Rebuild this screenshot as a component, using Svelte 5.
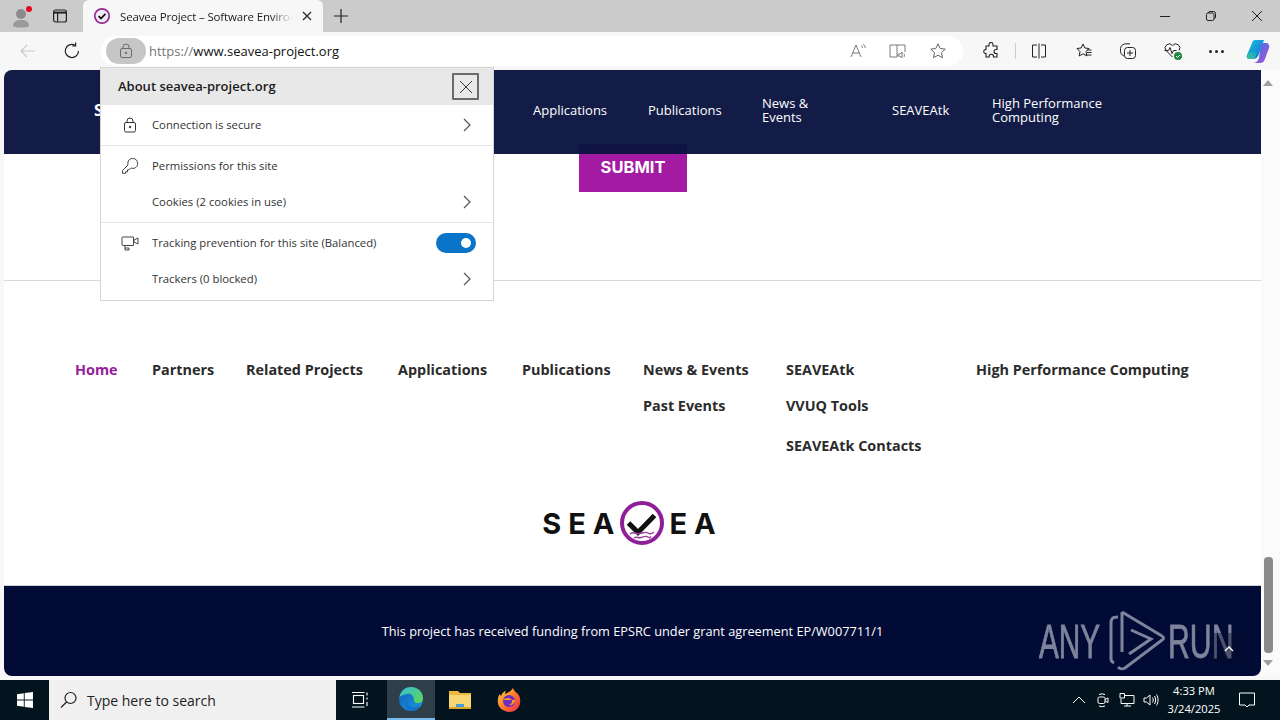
<script lang="ts">
	const headerNav = [
		{ label: 'Applications', w: 115 },
		{ label: 'Publications', w: 114 },
		{ label: 'News & Events', w: 130, wrap: 70 },
		{ label: 'SEAVEAtk', w: 100 },
		{ label: 'High Performance Computing', w: 140, wrap: 125 }
	];
	const footerNav = [
		{ items: ['Home'], active: true },
		{ items: ['Partners'] },
		{ items: ['Related Projects'] },
		{ items: ['Applications'] },
		{ items: ['Publications'] },
		{ items: ['News & Events', 'Past Events'] },
		{ items: ['SEAVEAtk', 'VVUQ Tools', 'SEAVEAtk Contacts'] },
		{ items: ['High Performance Computing'] }
	];
</script>

<div class="browser">
	<div class="tabstrip">
		<div class="profile">
			<svg width="24" height="24" viewBox="0 0 24 24">
				<circle cx="11" cy="10" r="5" fill="#8b8b8b" />
				<path d="M3 22c0-5 4-6 8-6s8 1 8 6c-2 2-14 2-16 0z" fill="#9a9a9a" />
				<circle cx="19" cy="5" r="3" fill="#e00b1c" />
			</svg>
		</div>
		<div class="tabs-btn">
			<svg width="16" height="16" viewBox="0 0 16 16" fill="none" stroke="#222" stroke-width="1.2">
				<rect x="1.6" y="2" width="12.8" height="12" rx="2" />
				<path d="M1.6 4.6h12.8" stroke-width="2" />
				<path d="M5.6 4.6V14" />
			</svg>
		</div>
		<div class="tab">
			<svg class="fav" width="18" height="18" viewBox="0 0 18 18" fill="none">
				<circle cx="9" cy="9" r="7.2" stroke="#8f2b96" stroke-width="1.7" fill="#f3e9f4" />
				<path d="M5.6 9.200l2.400 2.300 4.400-4.600" stroke="#111" stroke-width="1.8" />
			</svg>
			<span class="tab-title">Seavea Project – Software Environment</span>
			<svg width="12" height="12" viewBox="0 0 12 12" stroke="#222" stroke-width="1.2"><path d="M2 2l8 8M10 2l-8 8" /></svg>
		</div>
		<div class="new-tab">
			<svg width="16" height="16" viewBox="0 0 16 16" stroke="#222" stroke-width="1.2"><path d="M8 1v14M1 8h14" /></svg>
		</div>
		<div class="window-btns">
			<svg width="12" height="12" viewBox="0 0 12 12" stroke="#222"><path d="M1 6.5h10" /></svg>
			<svg width="12" height="12" viewBox="0 0 12 12" fill="none" stroke="#222"><rect x="1.5" y="3" width="7.5" height="7.5" rx="1.5" /><path d="M3.5 3V2.8a1.5 1.5 0 0 1 1.5-1.3h3.5a2 2 0 0 1 2 2V7a1.5 1.5 0 0 1-1.5 1.5" /></svg>
			<svg width="12" height="12" viewBox="0 0 12 12" stroke="#222"><path d="M1 1l10 10M11 1L1 11" /></svg>
		</div>
	</div>

	<div class="toolbar">
		<svg class="back" width="18" height="18" viewBox="0 0 18 18" fill="none" stroke="#c9c9c9" stroke-width="1.2"><path d="M16 9H2M8 3L2 9l6 6" /></svg>
		<svg class="reload" width="18" height="18" viewBox="0 0 18 18" fill="none" stroke="#222" stroke-width="1.2"><path d="M15.5 9A6.6 6.6 0 1 1 11.8 3" /><path d="M12.6 .6v3.2H9.4" /></svg>
		<div class="omnibox">
			<div class="lock-pill">
				<svg width="14" height="16" viewBox="0 0 14 16" fill="none" stroke="#6d6d6d"><rect x="1.5" y="5.5" width="11" height="9" rx="1.5" /><path d="M4 5.5V4a3 3 0 0 1 6 0v1.500" /><circle cx="7" cy="10" r=".8" fill="#6d6d6d" /></svg>
			</div>
			<span class="url"><span class="scheme">https://</span>www.seavea-project.org</span>
			<div class="omni-icons">
				<svg width="18" height="18" viewBox="0 0 18 18" fill="none" stroke="#7a7a7a"><path d="M2 15L7 3l5 12M3.800 11h6.500" /><path d="M12 3.500c1 .5 1.500 1.500 1.500 2.500M14 2c1.500 1 2.200 2.200 2.200 4" /></svg>
				<svg width="20" height="18" viewBox="0 0 20 18" fill="none" stroke="#7a7a7a"><path d="M9 3H2v12h7V3zM9 3h8v7" /><path d="M10 12h2l2-2v6l-2-2h-2zM16 11.500c.6 1 .6 2.500 0 3.500" /></svg>
				<svg width="18" height="18" viewBox="0 0 18 18" fill="none" stroke="#666"><path d="M9 1.800l2.200 4.700 5 .6-3.700 3.500 1 5.100L9 13.200l-4.500 2.500 1-5.100-3.700-3.500 5-.6z" /></svg>
			</div>
		</div>
		<div class="tool-icons">
			<svg class="ext" width="18" height="18" viewBox="0 0 18 18" fill="none" stroke="#222" stroke-width="1.1"><path d="M7 2.500a2 2 0 0 1 4 0V4h4v3.500h-1a2 2 0 0 0 0 4h1V15h-3.500v-.5a2.200 2.200 0 0 0-4.400 0v.5H4v-3.500a2 2 0 0 1-.5-4H4V4h3z" /></svg>
			<span class="divider"></span>
			<svg class="split" width="18" height="18" viewBox="0 0 18 18" fill="none" stroke="#222"><path d="M7 3H2.500v12H7M11 3h4.500v12H11M9 1.500v15" /></svg>
			<svg class="favs" width="18" height="18" viewBox="0 0 18 18" fill="none" stroke="#222"><path d="M8 2l1.800 4 4.200.5-3 3 .8 4.500L8 11.800 4.200 14 5 9.500 2 6.500 6.200 6z" /><path d="M12 8h4.500M12 10.500h4.500M11.500 13h5" /></svg>
			<svg class="coll" width="18" height="18" viewBox="0 0 18 18" fill="none" stroke="#222"><path d="M5 14C2.500 13 1 11 1.500 6.500 2 3 4 1.800 8 1.800h3" /><rect x="5.500" y="5.500" width="11" height="11" rx="3" /><path d="M11 8v6M8 11h6" /></svg>
			<svg class="health" width="20" height="20" viewBox="0 0 20 20" fill="none" stroke="#222"><path d="M9.500 16L3 9.500A3.800 3.800 0 0 1 9.500 4.500a3.800 3.800 0 0 1 6.500 5" /><path d="M1.500 9.500h4l1.500-3 2 6 1.500-3h3" /><circle cx="15" cy="15" r="4" fill="#1f8a3e" stroke="none" /><path d="M13 15l1.500 1.500L17 14" stroke="#fff" /></svg>
			<span class="dots">
				<i></i><i></i><i></i>
			</span>
			<svg class="copilot" width="26" height="26" viewBox="0 0 26 26">
				<defs>
					<linearGradient id="cp1" x1="0" y1="0" x2="1" y2="1"><stop offset="0" stop-color="#19c3d6" /><stop offset="1" stop-color="#0f6fd8" /></linearGradient>
					<linearGradient id="cp2" x1="0" y1="0" x2="1" y2="1"><stop offset="0" stop-color="#2f7cf0" /><stop offset="1" stop-color="#b04fd0" /></linearGradient>
					<linearGradient id="cp3" x1="0" y1="1" x2="1" y2="0"><stop offset="0" stop-color="#3cc48a" /><stop offset="1" stop-color="#15a3d8" /></linearGradient>
				</defs>
				<path d="M10 2h9l-5 14c-1 3-3 5-6 5H4c-2 0-3-2-2-4l5-12c.5-2 1.500-3 3-3z" fill="url(#cp1)" />
				<path d="M16 5h5c2 0 4 2 3 5l-4 11c-1 3-3 4-5 4H8c3 0 5-2 6-5z" fill="url(#cp2)" />
				<path d="M3 16c2-2 6-3 9-2l-2 6c-1 1-2 1-3 1H4c-2 0-2-3-1-5z" fill="url(#cp3)" />
			</svg>
		</div>
	</div>

	<div class="viewport">
		<main class="page">
			<header class="site-header">
				<div class="brand">SEAVEA</div>
				<ul class="header-nav">
					{#each headerNav as item}
						<li style="width:{item.w}px"><span style={item.wrap ? `display:block;max-width:${item.wrap}px` : ''}>{item.label}</span></li>
					{/each}
				</ul>
			</header>

			<section class="form-end">
				<button class="submit">SUBMIT</button>
			</section>

			<section class="footer-menu">
				<ul class="cols">
					{#each footerNav as col}
						<li class="col">
							{#each col.items as label}
								<span class="link" class:active={col.active}>{label}</span>
							{/each}
						</li>
					{/each}
				</ul>
				<div class="logo">
					<span>SEA</span>
					<svg width="50" height="50" viewBox="0 0 50 50" fill="none">
						<circle cx="25" cy="25" r="20" stroke="#8f1f96" stroke-width="4" />
						<path d="M11.500 25l9.500 9.500L37.500 17.500" stroke="#111" stroke-width="5" />
						<path d="M13 36c4-3 6 .5 10-.5s6-2 8-.5 4 .5 6-1M17 40c3-2 4 .5 7-.5s5-2 7-.5 2 .5 3-.5" stroke="#9a3ea0" stroke-width="1.500" />
					</svg>
					<span>EA</span>
				</div>
			</section>

			<footer class="site-footer">
				<p>This project has received funding from EPSRC under grant agreement EP/W007711/1</p>
			</footer>
		</main>
		<div class="scrollbar">
			<span class="arrow up"></span>
			<div class="track"><div class="thumb"></div></div>
			<span class="arrow down"></span>
		</div>
	</div>

	<div class="taskbar">
		<div class="start">
			<svg width="16" height="16" viewBox="0 0 16 16" fill="#fff"><path d="M0 2.200l6.800-1V7.500H0zM7.700 1l8.300-1v7.500H7.700zM0 8.400h6.800v6.400L0 13.800zM7.700 8.400H16V16l-8.300-1.100z" /></svg>
		</div>
		<div class="search">
			<svg width="18" height="18" viewBox="0 0 18 18" fill="none" stroke="#222" stroke-width="1.200"><circle cx="10.500" cy="7" r="5.500" /><path d="M6.500 11L1 16.500" /></svg>
			<span>Type here to search</span>
		</div>
		<div class="task-item view">
			<svg width="18" height="18" viewBox="0 0 18 18" fill="none" stroke="#fff" stroke-width="1.100"><rect x="2.500" y="4.500" width="10" height="8" /><path d="M1 1.500h12.500M1 16h12.500M16 1.500v3M16 6.500v2M16 11v4" /></svg>
		</div>
		<div class="task-item current">
			<svg width="26" height="26" viewBox="0 0 26 26">
				<defs>
					<linearGradient id="e1" x1="0" y1="0" x2="1" y2="1"><stop offset="0" stop-color="#35c1d8" /><stop offset="1" stop-color="#5fd44f" /></linearGradient>
					<linearGradient id="e2" x1="0" y1="0" x2="1" y2="1"><stop offset="0" stop-color="#0f5fb8" /><stop offset="1" stop-color="#1f9be0" /></linearGradient>
				</defs>
				<circle cx="13" cy="13" r="12" fill="url(#e2)" />
				<path d="M1.500 11C3 4 8 1 13 1c7 0 12 5 12 11 0 3-2 5-5 5-4 0-4-2-4-3 0-4-3-7-7-6-3 .5-6 2-8.500 3z" fill="url(#e1)" />
				<path d="M9 15c0 4 3 6 7 6 2 0 4-.5 6-2-2 4-6 6-9 6-3 0-5-2-5-5 0-2 .5-4 1-5z" fill="#1173c9" />
			</svg>
		</div>
		<div class="task-item">
			<svg width="24" height="22" viewBox="0 0 24 22">
				<path d="M1 2h9l2 2h11v16H1z" fill="#e8b93e" />
				<path d="M1 6h22v14H1z" fill="#f7d774" />
				<path d="M8 15h8v5H8z" fill="#4a9bd6" />
				<path d="M1 18h22v2H1z" fill="#d9a92e" />
			</svg>
		</div>
		<div class="task-item">
			<svg width="26" height="26" viewBox="0 0 26 26">
				<defs>
					<linearGradient id="ff" x1="0" y1="0" x2="1" y2="1"><stop offset="0" stop-color="#ffd83a" /><stop offset=".5" stop-color="#ff7a2a" /><stop offset="1" stop-color="#e4264f" /></linearGradient>
				</defs>
				<path d="M17 1c1 3 3 4 5 6 3 4 3 10 0 14-3 4-9 5-13 3C4 22 1 18 2 12c0-2 1-4 2-5 0 1 1 2 1 2 1-3 3-5 5-5-1 1-1 2-1 3 3-1 6-3 8-6z" fill="url(#ff)" />
				<circle cx="13" cy="14" r="6" fill="#6a2fc0" />
				<path d="M7 13c2-2 6-3 8-1 2 2 1 5-2 6 3 1 6-2 6-5" fill="#ff9a2a" />
			</svg>
		</div>
		<div class="tray">
			<svg class="tray-ico" width="16" height="16" viewBox="0 0 16 16" fill="none" stroke="#fff"><path d="M2 11l6-6 6 6" /></svg>
			<svg class="tray-ico" width="16" height="16" viewBox="0 0 16 16" fill="none" stroke="#fff"><rect x="3" y="5" width="7" height="6.500" rx="1.500" /><path d="M10 7.500l3-1.500v4.500l-3-1.500M4 2.500a7 7 0 0 1 6 0M4 14a7 7 0 0 0 6 0" /></svg>
			<svg class="tray-ico" width="16" height="16" viewBox="0 0 16 16" fill="none" stroke="#fff"><path d="M5 3.500h10v8H2V7M8 11.500V14M5 14h7M1 1.500h4.500V6H1z" /></svg>
			<svg class="tray-ico" width="16" height="16" viewBox="0 0 16 16" fill="none" stroke="#fff"><path d="M1 6v4h2.500L7 13V3L3.500 6zM9.500 5.500c1 1.500 1 3.500 0 5M11.500 4c1.500 2.500 1.500 5.500 0 8M13.500 2.500c2 3 2 8 0 11" /></svg>
			<div class="clock"><span>4:33 PM</span><span>3/24/2025</span></div>
			<svg class="notif" width="18" height="18" viewBox="0 0 18 18" fill="none" stroke="#fff"><path d="M1.500 2h15v12H11l-2 2-2-2H1.500z" /></svg>
		</div>
	</div>

	<aside class="site-info">
		<div class="info-head">
			<span>About seavea-project.org</span>
			<button class="info-close" aria-label="Close">
				<svg width="14" height="14" viewBox="0 0 14 14" stroke="#333"><path d="M1 1l12 12M13 1L1 13" /></svg>
			</button>
		</div>
		<div class="info-group">
			<div class="info-row">
				<svg width="18" height="18" viewBox="0 0 18 18" fill="none" stroke="#333"><rect x="3.500" y="6.500" width="11" height="9.500" rx="1.500" /><path d="M6 6.500V5a3 3 0 0 1 6 0v1.500" /><circle cx="9" cy="11" r=".8" fill="#333" /></svg>
				<span class="info-label">Connection is secure</span>
				<svg class="chev" width="10" height="14" viewBox="0 0 10 14" fill="none" stroke="#555" stroke-width="1.200"><path d="M2 1l6 6-6 6" /></svg>
			</div>
		</div>
		<div class="info-group perms">
			<div class="info-row tall">
				<svg width="18" height="18" viewBox="0 0 18 18" fill="none" stroke="#444"><path d="M11.500 1.500a5 5 0 0 1 1.500 9.800c-1.300.3-2.500 0-3-.5l-2 2H6.500v2H4.500v1.500H1.500V13.500l5.500-5.500c-.5-2 0-6.500 4.500-6.500z" /></svg>
				<span class="info-label">Permissions for this site</span>
			</div>
			<div class="info-row tall">
				<span class="ico-space"></span>
				<span class="info-label">Cookies (2 cookies in use)</span>
				<svg class="chev" width="10" height="14" viewBox="0 0 10 14" fill="none" stroke="#555" stroke-width="1.200"><path d="M2 1l6 6-6 6" /></svg>
			</div>
		</div>
		<div class="info-group tracking">
			<div class="info-row tall">
				<svg width="18" height="18" viewBox="0 0 18 18" fill="none" stroke="#444"><path d="M12 11.500H2A1 1 0 0 1 1 10.500V4a1 1 0 0 1 1-1h10.500v8.500zM13 6l4-2v6l-4-2zM4 11.500V16h4v-2H4" /></svg>
				<span class="info-label">Tracking prevention for this site (Balanced)</span>
				<span class="toggle"><i></i></span>
			</div>
			<div class="info-row tall">
				<span class="ico-space"></span>
				<span class="info-label">Trackers (0 blocked)</span>
				<svg class="chev" width="10" height="14" viewBox="0 0 10 14" fill="none" stroke="#555" stroke-width="1.200"><path d="M2 1l6 6-6 6" /></svg>
			</div>
		</div>
	</aside>

	<div class="watermark">
		<span>ANY</span>
		<svg width="56" height="62" viewBox="0 0 56 62" fill="none" stroke="#7f849c" stroke-width="3">
			<path d="M9 7C3 7 2 9 2 13v36c0 2 1 3 3 4" />
			<path d="M13 2L53 26c2 1 2 3 0 4L16 58c-2 1-4 2-7-1M13 2v40M22 20l20 9-22 15" />
		</svg>
		<span class="run">RUN</span>
	</div>
	<div class="to-top">
		<svg width="10" height="7" viewBox="0 0 10 7" fill="none" stroke="#fff" stroke-width="1.300"><path d="M1 6l4-4 4 4" /></svg>
	</div>
</div>

<style>
	:global(body) {
		margin: 0;
		font-family: 'Open Sans', sans-serif;
		background: #fff;
	}

	ul {
		list-style: none;
		margin: 0;
		padding: 0;
	}

	.browser {
		position: relative;
		display: flex;
		flex-direction: column;
		width: 1280px;
		height: 720px;
		overflow: hidden;
	}

	/* tab strip */
	.tabstrip {
		display: flex;
		align-items: flex-end;
		height: 32px;
		background: #cbcbcb;
		flex: none;
	}

	.profile {
		display: flex;
		align-items: center;
		justify-content: center;
		width: 44px;
		height: 32px;
	}

	.tabs-btn {
		display: flex;
		align-items: center;
		justify-content: center;
		width: 32px;
		height: 32px;
		margin-right: 7px;
	}

	.tab {
		display: flex;
		align-items: center;
		width: 240px;
		height: 32px;
		padding: 0 10px;
		box-sizing: border-box;
		background: #f7f7f7;
		border-radius: 6px 6px 0 0;
		gap: 9px;
	}

	.fav {
		flex: none;
	}

	.tab-title {
		flex: 1;
		overflow: hidden;
		white-space: nowrap;
		font-size: 11.5px;
		letter-spacing: -0.15px;
		color: #222;
		mask-image: linear-gradient(90deg, #000 88%, transparent);
	}

	.new-tab {
		display: flex;
		align-items: center;
		justify-content: center;
		width: 36px;
		height: 32px;
	}

	.window-btns {
		display: flex;
		align-items: center;
		gap: 34px;
		height: 32px;
		margin-left: auto;
		padding-right: 17px;
	}

	/* toolbar */
	.toolbar {
		display: flex;
		align-items: center;
		height: 38px;
		background: #f7f7f7;
		flex: none;
	}

	.back {
		margin-left: 19px;
	}

	.reload {
		margin-left: 26px;
	}

	.omnibox {
		display: flex;
		align-items: center;
		width: 862px;
		height: 30px;
		margin-left: 20px;
		padding-left: 5px;
		box-sizing: border-box;
		background: #fff;
		border-radius: 15px;
	}

	.lock-pill {
		display: flex;
		align-items: center;
		justify-content: center;
		width: 40px;
		height: 26px;
		border-radius: 13px;
		background: #c6c6c6;
	}

	.url {
		margin-left: 3px;
		font-size: 13px;
		color: #111;
	}

	.scheme {
		color: #777;
	}

	.omni-icons {
		display: flex;
		align-items: center;
		gap: 21px;
		margin-left: auto;
		padding-right: 16px;
	}

	.tool-icons {
		display: flex;
		align-items: center;
		margin-left: 19px;
	}

	.divider {
		width: 1px;
		height: 16px;
		margin: 0 14px 0 15px;
		background: #ccc;
	}

	.favs {
		margin-left: 27px;
	}

	.coll {
		margin-left: 26px;
	}

	.health {
		margin-left: 26px;
	}

	.dots {
		display: flex;
		gap: 3px;
		margin-left: 26px;
	}

	.dots i {
		width: 3px;
		height: 3px;
		border-radius: 50%;
		background: #222;
	}

	.copilot {
		margin-left: 21px;
	}

	/* page */
	.viewport {
		display: flex;
		flex: 1;
		min-height: 0;
		padding-left: 4px;
		background: #f7f7f7;
	}

	.page {
		display: flex;
		flex-direction: column;
		width: 1257px;
		height: 606px;
		overflow: hidden;
		background: #fff;
		border-radius: 8px 0 8px 8px;
	}

	.site-header {
		position: relative;
		z-index: 1;
		display: flex;
		align-items: center;
		height: 84px;
		flex: none;
		padding-bottom: 4px;
		box-sizing: border-box;
		background: rgba(11, 21, 64, 0.97);
		color: #fff;
		font-size: 13px;
		line-height: 14px;
	}

	.brand {
		width: 529px;
		padding-left: 90px;
		box-sizing: border-box;
		font-size: 16px;
		font-weight: 700;
	}

	.header-nav {
		display: flex;
		align-items: center;
	}

	.form-end {
		display: flex;
		justify-content: center;
		flex: none;
		margin-top: -10px;
		box-sizing: border-box;
		padding-left: 1px;
		border-bottom: 1px solid #d8d8d8;
		height: 137px;
	}

	.submit {
		width: 108px;
		height: 48px;
		padding: 0 0 2px;
		border: 0;
		background: #a31ba3;
		color: #fff;
		font-family: Inter, sans-serif;
		font-size: 16.500px;
		font-weight: 700;
	}

	.footer-menu {
		flex: 1;
		padding-top: 79px;
		box-sizing: border-box;
		min-height: 0;
	}

	.cols {
		display: grid;
		grid-template-columns: 77px 94px 152px 124px 121px 143px 190px auto;
		padding-left: 71px;
		height: 97px;
	}

	.col {
		display: flex;
		flex-direction: column;
		gap: 16px;
	}

	.link {
		font-size: 14.400px;
		line-height: 20px;
		font-weight: 700;
		white-space: nowrap;
		color: #2b2b2b;
	}

	.link + .link + .link {
		margin-top: 4px;
	}

	.link.active {
		color: #96209a;
	}

	.logo {
		display: flex;
		align-items: center;
		justify-content: center;
		margin-top: 41px;
		font-family: Inter, sans-serif;
		font-size: 29px;
		font-weight: 700;
		letter-spacing: 7px;
		color: #111;
	}

	.logo svg {
		margin: 0 2px 0 -4px;
	}

	.site-footer {
		display: flex;
		align-items: center;
		justify-content: center;
		height: 91px;
		flex: none;
		background: #020b36;
		border-top: 1px solid #cfd2dc;
		box-sizing: border-box;
	}

	.site-footer p {
		margin: 0;
		font-size: 12.750px;
		color: #fff;
	}

	.scrollbar {
		display: flex;
		flex-direction: column;
		align-items: center;
		width: 19px;
		height: 606px;
		background: #fbfbfb;
		box-sizing: border-box;
		padding: 10px 5px 10px 0;
	}

	.track {
		flex: 1;
		display: flex;
		flex-direction: column;
		justify-content: flex-end;
		width: 9px;
		padding-bottom: 7px;
	}

	.thumb {
		height: 96px;
		border-radius: 4px;
		background: #8a8a8a;
	}

	.arrow {
		width: 0;
		height: 0;
		border-left: 5px solid transparent;
		border-right: 5px solid transparent;
	}

	.arrow.up {
		border-bottom: 6px solid #a0a0a0;
	}

	.arrow.down {
		border-top: 6px solid #a0a0a0;
	}

	/* taskbar */
	.taskbar {
		display: flex;
		align-items: center;
		height: 40px;
		flex: none;
		background: #04141f;
		color: #fff;
	}

	.start {
		display: flex;
		align-items: center;
		justify-content: center;
		width: 49px;
	}

	.search {
		display: flex;
		align-items: center;
		gap: 9px;
		width: 287px;
		height: 40px;
		padding-left: 11px;
		box-sizing: border-box;
		background: #f0f0f0;
		color: #222;
		font-size: 14px;
	}

	.task-item {
		display: flex;
		align-items: center;
		justify-content: center;
		width: 48px;
		height: 40px;
		box-sizing: border-box;
		margin-right: 1px;
	}

	.task-item.view {
		margin-right: 3px;
	}

	.task-item.current {
		background: #2f3f49;
		border-bottom: 2px solid #76b9ed;
	}

	.tray {
		display: flex;
		align-items: center;
		margin-left: auto;
		padding-right: 24px;
	}

	.tray-ico {
		margin-right: 8px;
	}

	.clock {
		display: flex;
		flex-direction: column;
		align-items: center;
		width: 54px;
		margin-right: 17px;
		font-size: 11.200px;
		line-height: 18px;
	}

	/* site info flyout */
	.site-info {
		position: absolute;
		left: 100px;
		top: 67px;
		z-index: 3;
		width: 394px;
		height: 234px;
		box-sizing: border-box;
		background: #fff;
		border: 1px solid #d5d5d5;
		color: #333;
		font-size: 11.300px;
	}

	.info-head {
		display: flex;
		align-items: center;
		justify-content: space-between;
		height: 37px;
		padding: 0 14px 0 17px;
		background: #e8e8e8;
		font-size: 13px;
		font-weight: 600;
		color: #1b1b1b;
	}

	.info-head span {
		padding-bottom: 2px;
	}

	.info-close {
		display: flex;
		align-items: center;
		justify-content: center;
		width: 27px;
		height: 27px;
		padding: 0;
		background: transparent;
		border: 2px solid #6a6a6a;
		border-radius: 1px;
	}

	.info-group {
		border-bottom: 1px solid #e6e6e6;
	}

	.info-group.perms {
		padding: 2px 0;
	}

	.info-group.tracking {
		padding-top: 2px;
		border-bottom: 0;
	}

	.info-row {
		display: flex;
		align-items: center;
		height: 40px;
		padding: 0 21px 0 20px;
	}

	.info-row.tall {
		height: 36px;
	}

	.info-label {
		margin-left: 13px;
		padding-bottom: 1px;
		white-space: nowrap;
	}

	.ico-space {
		width: 18px;
	}

	.chev {
		margin-left: auto;
	}

	.toggle {
		display: flex;
		align-items: center;
		justify-content: flex-end;
		width: 40px;
		height: 20px;
		margin: 0 -4px 0 auto;
		padding-right: 5px;
		box-sizing: border-box;
		border-radius: 10px;
		background: #0a74c9;
	}

	.toggle i {
		width: 10px;
		height: 10px;
		border-radius: 50%;
		background: #fff;
	}

	.watermark {
		position: absolute;
		left: 1039px;
		top: 610px;
		z-index: 2;
		display: flex;
		align-items: center;
		font-family: 'Liberation Sans', sans-serif;
		font-size: 48px;
		color: #7f849c;
		-webkit-text-stroke: 0.8px #7f849c;
		pointer-events: none;
	}

	.watermark span {
		display: inline-block;
		width: 61px;
		margin-right: 9px;
		transform: scaleX(0.62);
		transform-origin: left center;
		white-space: nowrap;
	}

	.watermark .run {
		margin: 0 0 0 3px;
		transform: scaleX(0.63);
	}

	.to-top {
		position: absolute;
		left: 1214px;
		top: 633px;
		z-index: 2;
		display: flex;
		align-items: center;
		justify-content: center;
		width: 30px;
		height: 30px;
		background: rgba(2, 11, 40, 0.4);
	}
</style>
